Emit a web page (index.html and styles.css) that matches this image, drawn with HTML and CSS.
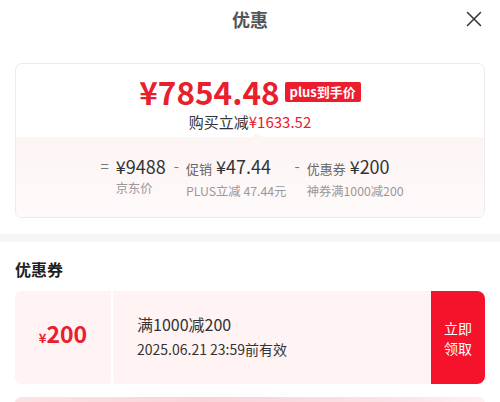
FILE: index.html
```html
<!DOCTYPE html>
<html lang="zh">
<head>
<meta charset="utf-8">
<link rel="stylesheet" href="styles.css">
</head>
<body>
<div class="page">
  <header class="header">
    <div class="title">优惠</div>
    <svg class="close" width="16" height="16" viewBox="0 0 16 16"><path d="M1.5 1.5L14.5 14.5M14.5 1.5L1.5 14.5" stroke="#333" stroke-width="1.5" fill="none" stroke-linecap="round"/></svg>
  </header>

  <section class="price-card">
    <div class="price-top">
      <div class="price-line">
        <span class="big-price">¥7854.48</span>
        <span class="badge">plus到手价</span>
      </div>
      <div class="saving">购买立减<span class="red">¥1633.52</span></div>
      <span class="caret"></span>
    </div>
    <div class="price-bottom">
      <div class="calc">
        <span class="op">=</span>
        <div class="col">
          <div class="val"><span class="amt">¥9488</span></div>
          <div class="sub">京东价</div>
        </div>
        <span class="op">-</span>
        <div class="col">
          <div class="val"><span class="lbl">促销</span><span class="amt">¥47.44</span></div>
          <div class="sub">PLUS立减 47.44元</div>
        </div>
        <span class="op">-</span>
        <div class="col">
          <div class="val"><span class="lbl">优惠券</span><span class="amt">¥200</span></div>
          <div class="sub">神券满1000减200</div>
        </div>
      </div>
    </div>
  </section>

  <div class="band"></div>

  <h2 class="sec-title">优惠券</h2>

  <div class="coupon">
    <div class="c-left"><span class="yen">¥</span><span class="num">200</span></div>
    <div class="c-mid">
      <div class="c-name">满1000减200</div>
      <div class="c-date">2025.06.21 23:59前有效</div>
    </div>
    <div class="c-btn">立即<br>领取</div>
  </div>

  <div class="next-card"></div>
</div>
</body>
</html>
```

FILE: styles.css
```css
* { box-sizing: border-box; }
html, body { margin: 0; padding: 0; background: #fff; }
body {
  font-family: "Noto Sans CJK SC", "Noto Sans", sans-serif;
  color: #333;
  width: 500px;
  height: 402px;
  overflow: hidden;
}
.page { display: flex; flex-direction: column; }

.header {
  position: relative;
  height: 38px;
  display: flex;
  align-items: center;
  justify-content: center;
}
.title { font-size: 18px; font-weight: 700; color: #555; line-height: 1; }
.close { position: absolute; right: 18px; top: 11px; }

.price-card {
  margin: 25px 15px 0;
  border: 1px solid #f2e8e9;
  border-radius: 7px;
  overflow: hidden;
}
.price-top {
  position: relative;
  display: flex;
  flex-direction: column;
  align-items: center;
  padding-top: 12px;
  height: 73px;
}
.price-line { display: flex; align-items: center; gap: 5px; height: 32px; }
.big-price {
  font-size: 31.5px;
  font-weight: 700;
  color: #e8202d;
  line-height: 1;
}
.badge {
  background: #ec1d2e;
  color: #fff;
  font-size: 13px;
  font-weight: 700;
  line-height: 20px;
  padding: 0 5px;
  border-radius: 2px;
}
.saving { font-size: 15px; line-height: 20px; margin-top: 4px; color: #333; }
.red { color: #e8202d; }
.caret {
  position: absolute;
  left: 236px;
  bottom: 0;
  width: 0; height: 0;
  border-left: 5px solid transparent;
  border-right: 5px solid transparent;
  border-bottom: 4px solid #fdf4f4;
}
.price-bottom {
  background: linear-gradient(180deg, #fdf4f4, #fffafa);
  height: 80px;
  display: flex;
  justify-content: center;
  padding-top: 17px;
}
.calc { display: flex; align-items: flex-start; margin-left: 4px; }
.op { color: #777; font-size: 15px; line-height: 24px; margin: 0 7px 0 8px; }
.calc .op:first-child { margin-left: 0; }
.col { display: flex; flex-direction: column; align-items: flex-start; }
.val { display: flex; align-items: baseline; line-height: 24px; }
.lbl { color: #666; font-size: 13px; margin-right: 4px; }
.amt { font-size: 18px; color: #333; }
.sub { font-size: 12.3px; color: #999; line-height: 18px; margin-top: 1px; }

.band { height: 8px; background: #f6f6f9; margin-top: 16px; }

.sec-title {
  margin: 17px 15px 0;
  font-size: 16px;
  font-weight: 700;
  line-height: 20px;
  color: #222;
}

.coupon {
  margin: 12px 15px 0;
  height: 93px;
  display: flex;
  gap: 2px;
}
.c-left {
  width: 96px;
  background: #fff3f4;
  border-radius: 6px 2px 2px 6px;
  display: flex;
  align-items: baseline;
  justify-content: center;
  padding-top: 31px;
  color: #e8202d;
}
.yen { font-size: 13px; font-weight: 700; }
.num { font-size: 23px; font-weight: 700; line-height: 1; }
.c-mid {
  flex: 1;
  background: #fff3f4;
  border-radius: 2px 0 0 2px;
  padding: 21px 0 0 24px;
}
.c-name { font-size: 16px; line-height: 24px; color: #333; }
.c-date { font-size: 14px; line-height: 22px; color: #333; margin-top: 2px; }
.c-btn {
  width: 54px;
  background: #f5122b;
  border-radius: 0 8px 8px 0;
  margin-left: -2px;
  color: #fff;
  font-size: 14px;
  line-height: 20px;
  display: flex;
  align-items: center;
  justify-content: center;
  text-align: center;
}

.next-card {
  margin: 13px 15px 0;
  height: 20px;
  border-radius: 6px 6px 0 0;
  background: linear-gradient(90deg, #fde3e3, #f9d3d8 40%, #fbe2e6 80%, #fff0f2);
}
```
